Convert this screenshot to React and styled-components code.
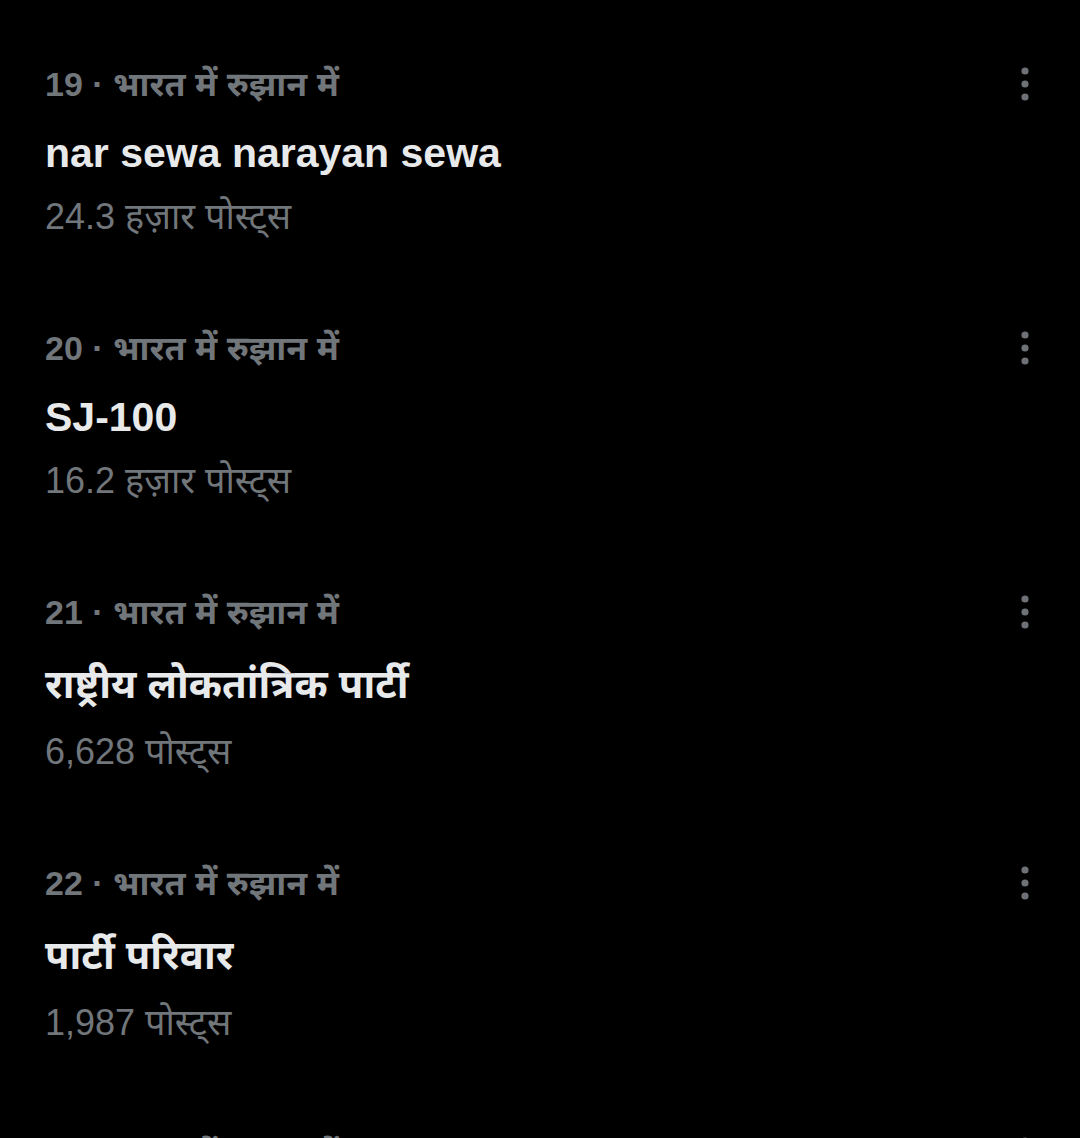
import React from "react";
import styled, { createGlobalStyle } from "styled-components";

const GlobalStyle = createGlobalStyle`
  html, body {
    margin: 0;
    padding: 0;
    background: #000;
  }
  body {
    font-family: "Liberation Sans", "Noto Sans Devanagari", "Lohit Devanagari", "Noto Sans", sans-serif;
    -webkit-font-smoothing: antialiased;
  }
`;

const List = styled.main`
  display: flex;
  flex-direction: column;
  padding-top: 24px;
  background: #000;
  min-height: 100vh;
`;

const Item = styled.article`
  display: flex;
  flex-direction: column;
  padding: 40px 40px 49px 45px;
`;

const Meta = styled.div`
  display: flex;
  justify-content: space-between;
  align-items: center;
  height: 40px;
  line-height: 40px;
  font-size: 34px;
  font-weight: 700;
  color: #71767b;
  white-space: nowrap;
`;

const Title = styled.div`
  margin-top: 25px;
  line-height: ${(p) => (p.$deva ? "55px" : "48px")};
  font-size: ${(p) => (p.$deva ? "40px" : "41px")};
  font-weight: 700;
  color: #e7e9ea;
  white-space: nowrap;
`;

const Count = styled.div`
  margin-top: 18px;
  line-height: 44px;
  font-size: 36px;
  color: #71767b;
  white-space: nowrap;
`;

const MoreButton = styled.button`
  display: flex;
  align-items: center;
  justify-content: center;
  width: 30px;
  height: 40px;
  padding: 0;
  border: none;
  background: transparent;
  color: #6e7276;
  cursor: pointer;
`;

const MoreIcon = () => (
  <svg width="30" height="40" viewBox="0 0 30 40" fill="currentColor">
    <circle cx="15" cy="7" r="3.6" />
    <circle cx="15" cy="20" r="3.6" />
    <circle cx="15" cy="33" r="3.6" />
  </svg>
);

const trends = [
  { rank: 19, title: "nar sewa narayan sewa", count: "24.3 हज़ार पोस्ट्स" },
  { rank: 20, title: "SJ-100", count: "16.2 हज़ार पोस्ट्स" },
  { rank: 21, title: "राष्ट्रीय लोकतांत्रिक पार्टी", count: "6,628 पोस्ट्स", deva: true },
  { rank: 22, title: "पार्टी परिवार", count: "1,987 पोस्ट्स", deva: true },
  { rank: 23, title: "रविवार", count: "1,204 पोस्ट्स", deva: true },
];

export default function App() {
  return (
    <>
      <GlobalStyle />
      <List>
        {trends.map((t) => (
          <Item key={t.rank}>
            <Meta>
              <span>{t.rank} · भारत में रुझान में</span>
              <MoreButton aria-label="More">
                <MoreIcon />
              </MoreButton>
            </Meta>
            <Title $deva={t.deva}>{t.title}</Title>
            <Count>{t.count}</Count>
          </Item>
        ))}
      </List>
    </>
  );
}
